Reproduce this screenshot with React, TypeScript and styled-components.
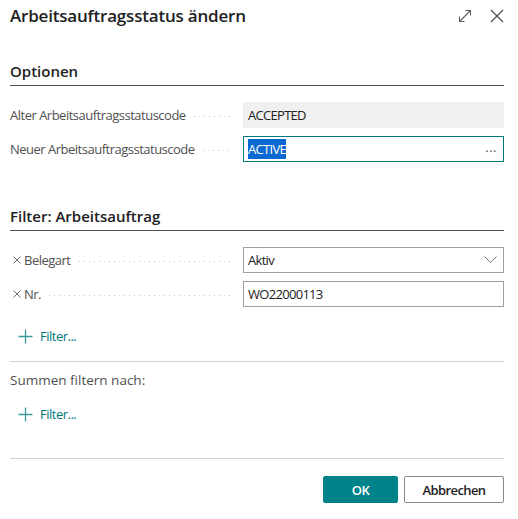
import React from "react";
import styled, { createGlobalStyle } from "styled-components";

const Global = createGlobalStyle`
  html, body { margin: 0; padding: 0; background: #ffffff; }
  body { font-family: "Open Sans", "Noto Sans", sans-serif; color: #212121; }
  * { box-sizing: border-box; }
`;

const Dialog = styled.div`
  width: 518px;
  height: 519px;
  padding: 0 14px 0 10px;
  display: flex;
  flex-direction: column;
  background: #fff;
`;

const Header = styled.div`
  height: 32px;
  display: flex;
  align-items: center;
`;

const Title = styled.h1`
  flex: 1;
  margin: 0;
  font-size: 17px;
  font-weight: 600;
  line-height: 32px;
  color: #212121;
  letter-spacing: -0.2px;
`;

const IconButton = styled.button<{ $ml?: number }>`
  border: 0;
  background: transparent;
  padding: 0;
  margin-left: ${(p) => p.$ml ?? 0}px;
  width: 14px;
  height: 14px;
  display: flex;
  align-items: center;
  justify-content: center;
  color: #505050;
  cursor: pointer;
`;

const SectionHeader = styled.h2<{ $pt: number }>`
  margin: 0;
  padding-top: ${(p) => p.$pt}px;
  padding-bottom: 2px;
  font-size: 15px;
  font-weight: 600;
  line-height: 24px;
  color: #212121;
  border-bottom: 1px solid #505050;
`;

const Fields = styled.div`
  margin-top: 16px;
  display: flex;
  flex-direction: column;
  gap: 8px;
`;

const FieldRow = styled.div`
  display: grid;
  grid-template-columns: 233px 1fr;
  height: 26px;
  align-items: center;
`;

const LabelCell = styled.div`
  display: flex;
  align-items: center;
  padding-right: 10px;
  height: 100%;
`;

const RemoveX = styled.span`
  width: 14px;
  display: flex;
  align-items: center;
  justify-content: flex-start;
  padding-left: 3px;
  color: #707070;
`;

const Label = styled.span`
  font-size: 13px;
  letter-spacing: -0.5px;
  color: #505050;
  white-space: nowrap;
`;

const Leader = styled.span`
  flex: 1;
  height: 1px;
  margin-left: 8px;
  margin-top: 3px;
  background-image: linear-gradient(to right, #c8c8c8 1px, transparent 1px);
  background-size: 5px 1px;
  background-repeat: repeat-x;
`;

const Input = styled.div<{ $variant: "readonly" | "focus" | "normal" }>`
  height: 26px;
  display: flex;
  align-items: center;
  padding: 0 6px 0 4px;
  font-size: 13px;
  letter-spacing: -0.7px;
  color: #212121;
  background: ${(p) => (p.$variant === "readonly" ? "#f0f0f0" : "#ffffff")};
  border: 1px solid
    ${(p) =>
      p.$variant === "readonly" ? "#f0f0f0" : p.$variant === "focus" ? "#00797d" : "#a0a0a0"};
`;

const Value = styled.span`
  flex: 1;
  white-space: nowrap;
`;

const Selected = styled.span`
  background: #0a68d0;
  color: #ffffff;
  padding: 1px 0;
`;

const Ellipsis = styled.span`
  font-size: 13px;
  color: #505050;
  letter-spacing: 0.5px;
  line-height: 1;
  margin-top: -4px;
`;

const AddFilter = styled.button<{ $mt: number }>`
  margin-top: ${(p) => p.$mt}px;
  height: 26px;
  border: 0;
  background: transparent;
  padding: 0 0 0 8px;
  display: flex;
  align-items: center;
  gap: 7px;
  font-family: inherit;
  font-size: 13px;
  letter-spacing: -0.5px;
  color: #00767b;
  cursor: pointer;
  align-self: flex-start;
`;

const Divider = styled.div<{ $mt: number }>`
  margin-top: ${(p) => p.$mt}px;
  height: 1px;
  background: #d2d2d2;
`;

const SubCaption = styled.div`
  margin-top: 8px;
  font-size: 13.5px;
  line-height: 20px;
  color: #505050;
`;

const Footer = styled.div`
  margin-top: 17px;
  display: flex;
  justify-content: flex-end;
  gap: 6px;
`;

const Button = styled.button<{ $primary?: boolean; $w: number }>`
  width: ${(p) => p.$w}px;
  height: 27px;
  border-radius: 2px;
  font-family: inherit;
  font-size: 13px;
  letter-spacing: -0.6px;
  font-weight: 600;
  cursor: pointer;
  border: 1px solid ${(p) => (p.$primary ? "#00848a" : "#8a8a8a")};
  background: ${(p) => (p.$primary ? "#00848a" : "#ffffff")};
  color: ${(p) => (p.$primary ? "#ffffff" : "#212121")};
`;

const ExpandIcon = () => (
  <svg width="14" height="14" viewBox="0 0 14 14" fill="none" stroke="#606060" strokeWidth="1.1">
    <path d="M1.5 12.5 L12.5 1.5" />
    <path d="M7.5 1.5 H12.5 V6.5" />
    <path d="M1.5 7.5 V12.5 H6.5" />
  </svg>
);

const CloseIcon = () => (
  <svg width="14" height="14" viewBox="0 0 14 14" fill="none" stroke="#505050" strokeWidth="1.3">
    <path d="M1 1 L13 13 M13 1 L1 13" />
  </svg>
);

const SmallX = () => (
  <svg width="8" height="8" viewBox="0 0 8 8" fill="none" stroke="#707070" strokeWidth="1">
    <path d="M0.5 0.5 L7.5 7.5 M7.5 0.5 L0.5 7.5" />
  </svg>
);

const Chevron = () => (
  <svg width="13" height="8" viewBox="0 0 13 8" fill="none" stroke="#707070" strokeWidth="1">
    <path d="M0.5 0.5 L6.5 6.5 L12.5 0.5" />
  </svg>
);

const PlusIcon = () => (
  <svg width="15" height="15" viewBox="0 0 15 15" fill="none" stroke="#3b9a9e" strokeWidth="1.3">
    <path d="M7.5 0.5 V14.5 M0.5 7.5 H14.5" />
  </svg>
);

export default function App() {
  return (
    <>
      <Global />
      <Dialog>
        <Header>
          <Title>Arbeitsauftragsstatus ändern</Title>
          <IconButton aria-label="Maximieren">
            <ExpandIcon />
          </IconButton>
          <IconButton $ml={18} aria-label="Schließen">
            <CloseIcon />
          </IconButton>
        </Header>

        <SectionHeader $pt={27}>Optionen</SectionHeader>
        <Fields>
          <FieldRow>
            <LabelCell>
              <Label>Alter Arbeitsauftragsstatuscode</Label>
              <Leader />
            </LabelCell>
            <Input $variant="readonly">
              <Value>ACCEPTED</Value>
            </Input>
          </FieldRow>
          <FieldRow>
            <LabelCell>
              <Label>Neuer Arbeitsauftragsstatuscode</Label>
              <Leader />
            </LabelCell>
            <Input $variant="focus">
              <Value>
                <Selected>ACTIVE</Selected>
              </Value>
              <Ellipsis>...</Ellipsis>
            </Input>
          </FieldRow>
        </Fields>

        <SectionHeader $pt={42}>Filter: Arbeitsauftrag</SectionHeader>
        <Fields>
          <FieldRow>
            <LabelCell>
              <RemoveX>
                <SmallX />
              </RemoveX>
              <Label>Belegart</Label>
              <Leader />
            </LabelCell>
            <Input $variant="normal">
              <Value>Aktiv</Value>
              <Chevron />
            </Input>
          </FieldRow>
          <FieldRow>
            <LabelCell>
              <RemoveX>
                <SmallX />
              </RemoveX>
              <Label>Nr.</Label>
              <Leader />
            </LabelCell>
            <Input $variant="normal">
              <Value>WO22000113</Value>
            </Input>
          </FieldRow>
        </Fields>
        <AddFilter $mt={16}>
          <PlusIcon />
          Filter...
        </AddFilter>

        <Divider $mt={12} />
        <SubCaption>Summen filtern nach:</SubCaption>
        <AddFilter $mt={11}>
          <PlusIcon />
          Filter...
        </AddFilter>

        <Divider $mt={31} />
        <Footer>
          <Button $primary $w={75}>OK</Button>
          <Button $w={100}>Abbrechen</Button>
        </Footer>
      </Dialog>
    </>
  );
}
